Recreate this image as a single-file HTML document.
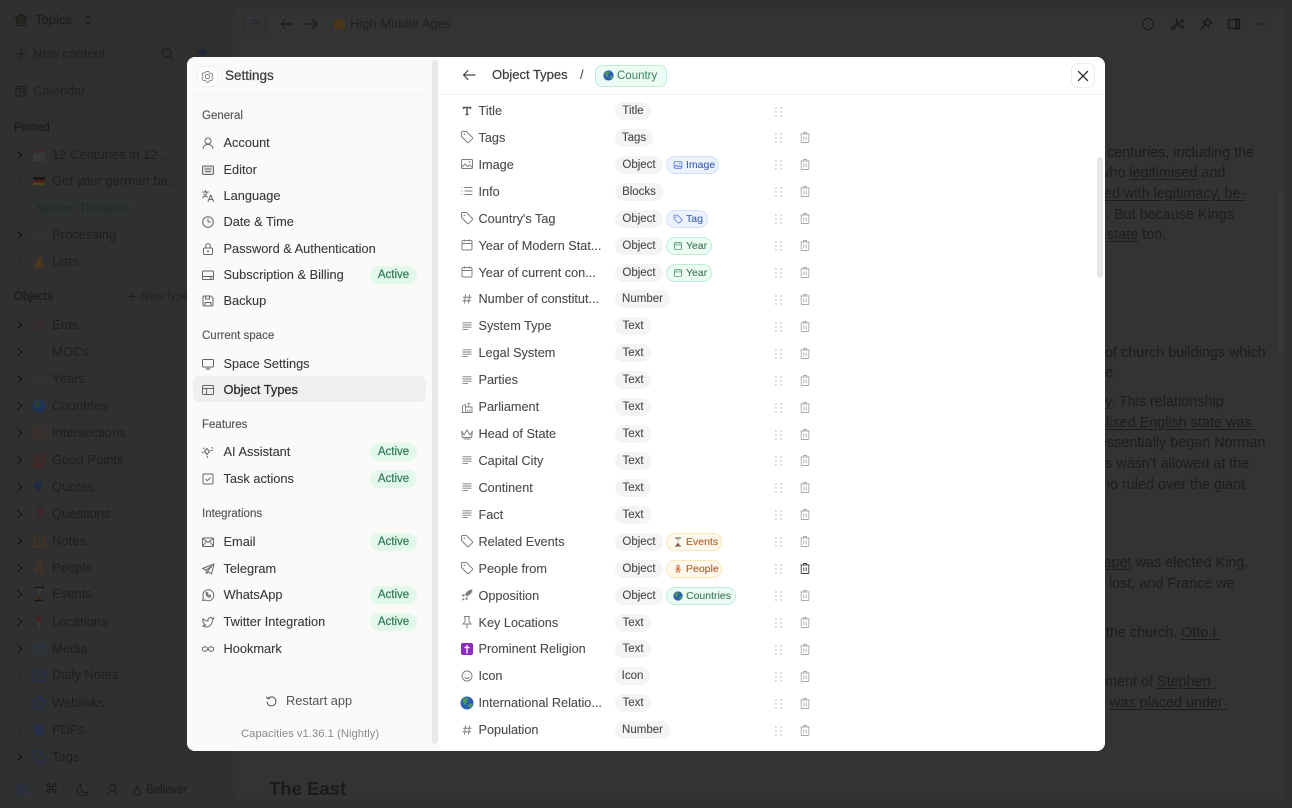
<!DOCTYPE html>
<html lang="en"><head><meta charset="utf-8"><title>Settings</title>
<style>
*{box-sizing:border-box}
html,body{margin:0;padding:0;width:1292px;height:808px;overflow:hidden;background:#303030;font-family:"Liberation Sans","Noto Sans CJK SC",sans-serif}
#w{position:absolute;left:0;top:0;width:1292px;height:808px;overflow:hidden;filter:blur(.3px)}
.a{position:absolute;white-space:nowrap}
svg{display:block;overflow:visible}
svg.s{fill:none;stroke:currentColor;stroke-width:1;stroke-linecap:round;stroke-linejoin:round}
.main{position:absolute;left:233px;top:8px;width:1052px;height:792px;background:#333;border:1px solid #323232;border-radius:8px}
.p{position:absolute;font-size:14.4px;line-height:20px;color:#1d1d1d;white-space:nowrap}
.p u{text-underline-offset:2px}
.st{position:absolute;left:0;width:190px;height:20px;font-size:13px;line-height:20px;color:#1e1e1e;white-space:nowrap}
.st .t{position:absolute;left:52px;top:0}
.st .ch{position:absolute;left:16px;top:6px;width:8px;height:8px;color:#141414}
.st .ch.d{color:#2a2a2a}
.st .ic{position:absolute;left:31px;top:2px;width:16px;height:16px}
.hd{position:absolute;font-size:11.5px;line-height:16px;color:#1b1b1b;-webkit-text-stroke:.2px #1b1b1b}
.box{position:absolute;border:1px solid #2e2e2e;background:#2f2f2f;border-radius:7px}
.modal{position:absolute;left:187px;top:57px;width:918px;height:694px;background:#fff;border-radius:8px;overflow:hidden}
.lp{position:absolute;left:187px;top:57px;width:252px;height:694px;background:#fafaf9;border-radius:8px 0 0 8px}
.li{position:absolute;left:0;width:252px;height:20px;margin-left:187px;font-size:12.8px;line-height:20px;color:#383838;white-space:nowrap;-webkit-text-stroke:.1px #383838}
.li svg{position:absolute;left:14px;top:3px;width:14px;height:14px;color:#666}
.li .t{position:absolute;left:36.5px;top:0}
.ac{position:absolute;left:183px;top:1px;width:47px;height:18px;border-radius:9px;background:#e3f8ec;color:#2f7a52;font-size:11.5px;line-height:18px;text-align:center;-webkit-text-stroke:.2px #2f7a52}
.sh{position:absolute;left:202px;font-size:11.5px;line-height:16px;color:#555;-webkit-text-stroke:.15px #555;white-space:nowrap}
.rows{position:absolute;left:0;top:97.5px;width:1292px}
.r{position:relative;height:26.93px;font-size:12.7px;color:#4a4a4a;-webkit-text-stroke:.1px #4a4a4a}
.r>svg.i{position:absolute;left:460px;top:6px;width:14px;height:14px;color:#808080}
.r>.n{position:absolute;left:478.5px;top:3.5px;line-height:20px;white-space:nowrap}
.r>.c{position:absolute;left:615px;top:4.5px;height:18px;border-radius:9px;background:#f4f4f3;font-size:11.5px;line-height:18px;text-align:center;color:#484848}
.r>.o{position:absolute;left:666px;top:4.5px;height:18px;border-radius:9px;font-size:10.5px;line-height:16px;border:1px solid;display:block;white-space:nowrap}
.o svg{position:absolute;left:6px;top:3px;width:10px;height:10px}
.o span{position:absolute;left:19px;top:0}
.bl{color:#3a67d0;background:#ecf3fe;border-color:#cfe0fb!important}
.gr{color:#3a8560;background:#ecfbf3;border-color:#bfeed5!important}
.or{color:#c4622a;background:#fef9ec;border-color:#f9e5b8!important}
.r>svg.dg{position:absolute;left:774.500px;top:9px;width:7px;height:10px;color:#d6d6d6}
.r>svg.tr{position:absolute;left:800px;top:8px;width:10px;height:11px;color:#aaa}
</style></head><body><div id="w">

<svg width="0" height="0" style="position:absolute">
<defs>
<symbol id="chev" viewBox="0 0 8 8"><path d="M2 .5 5.600 4 2 7.500" fill="none" stroke="currentColor" stroke-width="1.100" stroke-linecap="round" stroke-linejoin="round"/></symbol>
<symbol id="tag" viewBox="0 0 14 14"><path d="M1.500 2.400c0-.5.400-.9.900-.9h4l6 6c.4.400.4 1 0 1.300l-3.700 3.700c-.4.400-1 .4-1.300 0l-5.900-6z" fill="none" stroke="currentColor" stroke-width="1"/><circle cx="4.300" cy="4.300" r=".8" fill="currentColor"/></symbol>
<symbol id="img" viewBox="0 0 14 14"><rect x="1.500" y="2.500" width="11" height="9" rx="1" fill="none" stroke="currentColor"/><path d="m2 10 3-3 2.500 2.500L9.500 8l3 2.500" fill="none" stroke="currentColor"/><circle cx="9.500" cy="5.200" r=".8" fill="currentColor"/></symbol>
<symbol id="list" viewBox="0 0 14 14"><path d="M4.500 3.500h8M4.500 7h8M4.500 10.500h8M1.500 3.500h.8M1.500 7h.8M1.500 10.500h.8" fill="none" stroke="currentColor" stroke-width="1.100"/></symbol>
<symbol id="cal" viewBox="0 0 14 14"><rect x="2" y="2.500" width="10" height="9.500" rx="1.200" fill="none" stroke="currentColor"/><path d="M2 5.500h10M4.500 1.500v2M9.500 1.500v2" fill="none" stroke="currentColor"/></symbol>
<symbol id="hash" viewBox="0 0 14 14"><path d="M5.500 2.500 4.500 11.500M9.500 2.500 8.500 11.500M3 5.300h8.500M2.500 8.700H11" fill="none" stroke="currentColor" stroke-width="1"/></symbol>
<symbol id="txt" viewBox="0 0 14 14"><path d="M2.500 3.800h9M2.500 6h9M2.500 8.200h9M2.500 10.400h5.500" fill="none" stroke="currentColor" stroke-width=".9"/></symbol>
<symbol id="drag" viewBox="0 0 7 10"><g fill="currentColor"><rect x="0" y="0" width="1.800" height="1.800"/><rect x="5" y="0" width="1.800" height="1.800"/><rect x="0" y="4" width="1.800" height="1.800"/><rect x="5" y="4" width="1.800" height="1.800"/><rect x="0" y="8" width="1.800" height="1.800"/><rect x="5" y="8" width="1.800" height="1.800"/></g></symbol>
<symbol id="trash" viewBox="0 0 10 11"><path d="M.5 2h9M3.500 2V.5h3V2M1.200 2v8c0 .3.200.5.500.5h6.600c.3 0 .5-.2.500-.5V2M3.800 4.500v3.800M6.200 4.500v3.800" fill="none" stroke="currentColor" stroke-width=".9"/></symbol>
<symbol id="globe" viewBox="0 0 14 14"><circle cx="7" cy="7" r="6.500" fill="#2b5fb5"/><path d="M3 3c2-1 4-1.500 5.500-.5C8 4.500 6 4.500 6.500 6.500 7 8.500 5 9.500 4 8 3 7 2 5 3 3zM9 8c1.500-.5 3.500-.5 3.500.5-.3 2-1.500 3-3 3.500C8.500 11 8 9 9 8z" fill="#4d9b57"/></symbol>
<symbol id="hour" viewBox="0 0 14 14"><path d="M3 1.500h8M3 12.500h8" stroke="#555" stroke-width="1.500"/><path d="M4 2h6c0 3-2.500 3.800-2.500 5S10 9 10 12H4c0-3 2.500-3.800 2.500-5S4 5 4 2z" fill="#d9d9d9"/><path d="M4.800 12c0-1.500 1.200-3 2.200-3.500 1 .5 2.200 2 2.200 3.500z" fill="#8a4a2a"/></symbol>
<symbol id="people" viewBox="0 0 14 14"><g fill="none" stroke="#d2703a" stroke-width="1.200"><circle cx="7" cy="3.500" r="1.800"/><path d="M7 5.500 3 8.500M7 5.500l4 3M7 5.500l-2.500 7M7 5.500l2.500 7M4.800 10.500h4.400"/></g></symbol>
</defs>
</svg>

<!-- dimmed app: sidebar -->
<svg class="a" style="left:14px;top:13px;width:14px;height:14px;color:#1f1b14" viewBox="0 0 14 14"><path d="M1.500 5 7 1.500 12.500 5zM3 6v5M5.500 6v5M8.500 6v5M11 6v5M1.500 12.500h11" fill="none" stroke="currentColor" stroke-width="1.300"/></svg>
<div class="a" style="left:35px;top:10px;font-size:13px;line-height:20px;color:#1c1c1c;-webkit-text-stroke:.15px #1c1c1c">Topics</div>
<svg class="a s" style="left:82px;top:14px;width:12px;height:12px;color:#1c1c1c" viewBox="0 0 12 12"><path d="M3.500 4.500 6 1.500l2.500 3M3.500 7.500 6 10.500l2.500-3"/></svg>

<div class="box" style="left:8px;top:40px;width:139px;height:27px"></div>
<svg class="a s" style="left:15px;top:48px;width:12px;height:12px;color:#1c1c1c" viewBox="0 0 12 12"><path d="M6 1v10M1 6h10"/></svg>
<div class="a" style="left:33px;top:44px;font-size:13px;line-height:20px;color:#202020">New content</div>
<div class="box" style="left:154px;top:40px;width:27px;height:27px"></div>
<svg class="a s" style="left:161px;top:47px;width:13px;height:13px;color:#1c1c1c" viewBox="0 0 13 13"><circle cx="5.800" cy="5.800" r="4.300"/><path d="m9 9 3 3"/></svg>
<div class="box" style="left:188px;top:40px;width:27px;height:27px"></div>
<svg class="a" style="left:196px;top:47px;width:13px;height:10px" viewBox="0 0 13 10"><path d="M6.500 1 9 4l2-1-1 4H3L1 3l3 1z" fill="#22263c"/></svg>

<svg class="a s" style="left:15px;top:85px;width:12px;height:12px;color:#1c1c1c" viewBox="0 0 12 12"><rect x="1" y="1.500" width="10" height="9.500" rx="1"/><path d="M1 4h10M4 6.500h1.500v2.500M7.500 6.500H9v2.500"/></svg>
<div class="a" style="left:33px;top:81px;font-size:13px;line-height:20px;color:#202020">Calendar</div>

<div class="hd" style="left:14px;top:120px">Pinned</div>

<div class="st" style="top:145px"><svg class="ch"><use href="#chev"/></svg><svg class="ic" viewBox="0 0 14 14"><rect x="2" y="2" width="10" height="10.500" rx="1" fill="#3a3a3a"/><rect x="2" y="2" width="10" height="3" fill="#40282a"/></svg><span class="t">12 Centuries in 12 ...</span></div>
<div class="st" style="top:171px"><svg class="ch d"><use href="#chev"/></svg><svg class="ic" viewBox="0 0 14 14"><rect x="2" y="3.500" width="10" height="2.400" fill="#151515"/><rect x="2" y="5.900" width="10" height="2.400" fill="#4a1c1c"/><rect x="2" y="8.300" width="10" height="2.400" fill="#4e431c"/></svg><span class="t">Get your german ba...</span></div>
<div class="a" style="left:32px;top:200px;width:102px;height:18px;border-radius:4px;background:#2f3230"></div>
<div class="st" style="top:198px;font-size:12px;color:#1f2a24"><svg class="ch d"><use href="#chev"/></svg><span class="t" style="left:36px">System Thoughts</span></div>
<div class="st" style="top:225px"><svg class="ch"><use href="#chev"/></svg><svg class="ic" viewBox="0 0 14 14"><circle cx="7" cy="7" r="4" fill="none" stroke="#3c3c34" stroke-width="1.100" stroke-dasharray="1.300 1.700"/></svg><span class="t">Processing</span></div>
<div class="st" style="top:252px"><svg class="ch d"><use href="#chev"/></svg><svg class="ic" viewBox="0 0 14 14"><path d="M3 12c-.5-3 .5-5 3-7 .5-1.500 1-3 2.500-3l1 2-1.500 1c1 1 3 2 3 4.500 0 2-1.500 2.500-3 2.500z" fill="#4a371c"/></svg><span class="t">Lists</span></div>

<div class="hd" style="left:14px;top:289px">Objects</div>
<svg class="a s" style="left:126px;top:291px;width:11px;height:11px;color:#1c1c1c" viewBox="0 0 12 12"><path d="M6 1v10M1 6h10"/></svg>
<div class="a" style="left:141px;top:289px;width:46px;overflow:hidden;font-size:11.500px;line-height:16px;color:#202020">New type</div>

<div class="st" style="top:315px"><svg class="ch"><use href="#chev"/></svg><svg class="ic" viewBox="0 0 14 14"><path d="m2.500 9 6.500-6.500 2.500 2.500L5 11.500z" fill="none" stroke="#3c2830" stroke-width="1.200"/></svg><span class="t">Eras</span></div>
<div class="st" style="top:342px"><svg class="ch"><use href="#chev"/></svg><svg class="ic" viewBox="0 0 14 14"><path d="m3 3 4 4 4-3M7 7l-3 4M7 7l4 3" fill="none" stroke="#2e3531" stroke-width="1.300"/></svg><span class="t">MOCs</span></div>
<div class="st" style="top:369px"><svg class="ch"><use href="#chev"/></svg><svg class="ic" style="color:#2f3733"><use href="#cal"/></svg><span class="t">Years</span></div>
<div class="st" style="top:396px"><svg class="ch"><use href="#chev"/></svg><svg class="ic" viewBox="0 0 14 14"><circle cx="7" cy="7" r="5.800" fill="#1f3358"/><path d="M4 3c2-1 3.500-1 4.500 0C8 5 6 5 6.500 7 6.500 8.500 5 8.500 4 7.500 3.500 6.500 3 4.500 4 3z" fill="#2a3f30"/></svg><span class="t">Countries</span></div>
<div class="st" style="top:423px"><svg class="ch"><use href="#chev"/></svg><svg class="ic" viewBox="0 0 14 14"><path d="M11 7.500V12H2.500V3.500H7M6 8l5.500-5.500" fill="none" stroke="#483024" stroke-width="1.200"/></svg><span class="t">Intersections</span></div>
<div class="st" style="top:450px"><svg class="ch"><use href="#chev"/></svg><svg class="ic" viewBox="0 0 14 14"><path d="M3 3 2 9M6 3h2l-.5 6h-2zM10 3h2l-.5 6h-2zM2 11h10M3 13h7" fill="none" stroke="#452422" stroke-width="1.200"/></svg><span class="t">Good Points</span></div>
<div class="st" style="top:477px"><svg class="ch"><use href="#chev"/></svg><svg class="ic" viewBox="0 0 14 14"><path d="M2.500 6c0-3 2-4 4.500-4 2.500 0 3.500 2 3 4.500-.5 2-2 3-3 3l-1 2.500-1-3C3.500 8.500 2.500 7.500 2.500 6z" fill="#202a40"/></svg><span class="t">Quotes</span></div>
<div class="st" style="top:504px"><svg class="ch"><use href="#chev"/></svg><svg class="ic" viewBox="0 0 14 14"><path d="M5 4.500C5 2 9.500 2 9.500 4.500c0 2-2.300 2-2.300 4M7.200 10.500v1.500" fill="none" stroke="#4a1c1a" stroke-width="1.700"/></svg><span class="t">Questions</span></div>
<div class="st" style="top:531px"><svg class="ch"><use href="#chev"/></svg><svg class="ic" viewBox="0 0 14 14"><rect x="3" y="2.500" width="8" height="9.500" rx="1" fill="none" stroke="#473520" stroke-width="1.300"/><path d="M5 7h4" stroke="#473520" stroke-width="1.200"/></svg><span class="t">Notes</span></div>
<div class="st" style="top:558px"><svg class="ch"><use href="#chev"/></svg><svg class="ic" viewBox="0 0 14 14"><g fill="none" stroke="#483222" stroke-width="1.300"><circle cx="7" cy="3.500" r="1.800"/><path d="M7 5.500 3 8.500M7 5.500l4 3M7 5.500l-2.500 7M7 5.500l2.500 7"/></g></svg><span class="t">People</span></div>
<div class="st" style="top:584px"><svg class="ch"><use href="#chev"/></svg><svg class="ic" viewBox="0 0 14 14"><path d="M3 1.500h8M3 12.500h8" stroke="#151515" stroke-width="1.500"/><path d="M4 2h6c0 3-2.500 3.800-2.500 5S10 9 10 12H4c0-3 2.500-3.800 2.500-5S4 5 4 2z" fill="#3a3a3a"/><path d="M4.800 12c0-1.500 1.200-3 2.200-3.500 1 .5 2.200 2 2.200 3.500z" fill="#3a2218"/></svg><span class="t">Events</span></div>
<div class="st" style="top:612px"><svg class="ch"><use href="#chev"/></svg><svg class="ic" viewBox="0 0 14 14"><circle cx="7" cy="4.500" r="2.500" fill="#4a1f1f"/><path d="M7 7v5.500" stroke="#3c3c3c" stroke-width="1.200"/></svg><span class="t">Locations</span></div>
<div class="st" style="top:639px"><svg class="ch"><use href="#chev"/></svg><svg class="ic" viewBox="0 0 14 14"><path d="M2.500 6h9v6h-9zM2.500 4.500l8.500-2 .4 1.500-8.500 2z" fill="none" stroke="#2b3442" stroke-width="1.200"/></svg><span class="t">Media</span></div>
<div class="st" style="top:665px"><svg class="ch d"><use href="#chev"/></svg><svg class="ic" viewBox="0 0 14 14"><rect x="2" y="2.500" width="10" height="9.500" rx="1.200" fill="none" stroke="#232f4c" stroke-width="1.300"/><path d="M2 5.500h10M5 8.500l1.500 1.500L9 7.500" fill="none" stroke="#232f4c" stroke-width="1.100"/></svg><span class="t">Daily Notes</span></div>
<div class="st" style="top:693px"><svg class="ch d"><use href="#chev"/></svg><svg class="ic" viewBox="0 0 14 14"><circle cx="7" cy="7" r="5.300" fill="none" stroke="#232f4c" stroke-width="1.300"/><path d="M2.500 5c2 0 3 1 3.500 2s2 2 1.500 4.500M8 2c0 2 2 2 4 3" fill="none" stroke="#232f4c" stroke-width="1.200"/></svg><span class="t">Weblinks</span></div>
<div class="st" style="top:720px"><svg class="ch d"><use href="#chev"/></svg><svg class="ic" viewBox="0 0 14 14"><path d="M3 2h5l3 3v7H3z" fill="#232f4c"/><path d="M4 8.500h6M4 10.500h6" stroke="#3a3a3a" stroke-width=".8"/></svg><span class="t">PDFs</span></div>
<div class="st" style="top:747px"><svg class="ch"><use href="#chev"/></svg><svg class="ic" style="color:#232f4c"><use href="#tag"/></svg><span class="t">Tags</span></div>

<div class="box" style="left:9px;top:778px;width:25px;height:24px;background:#313131"></div>
<svg class="a s" style="left:15px;top:783px;width:14px;height:14px;color:#232f4c;stroke-width:1.300" viewBox="0 0 14 14"><path d="M7 1 12 4v6l-5 3-5-3V4z"/><circle cx="7" cy="7" r="2"/></svg>
<div class="a" style="left:45px;top:780px;font-size:13px;line-height:20px;color:#1c1c1c;-webkit-text-stroke:.2px #1c1c1c;font-family:'DejaVu Sans',sans-serif">⌘</div>
<svg class="a s" style="left:76px;top:783px;width:14px;height:14px;color:#1c1c1c" viewBox="0 0 14 14"><path d="M5.500 1.500A5.800 5.800 0 1 0 12.500 8.500 5 5 0 0 1 5.500 1.500z"/></svg>
<svg class="a s" style="left:106px;top:783px;width:13px;height:13px;color:#1c1c1c" viewBox="0 0 13 13"><circle cx="6.500" cy="4.500" r="3"/><path d="M1.500 12c.5-2.500 2.500-4 5-4s4.500 1.500 5 4"/></svg>
<div class="a" style="left:125px;top:780px;width:68px;height:20px;border-radius:10px;background:#313131"></div>
<svg class="a s" style="left:132px;top:785px;width:10px;height:11px;color:#1c1c1c" viewBox="0 0 10 11"><path d="M5 1c.5 2 3.500 3 3.500 6A3.500 3.500 0 0 1 1.500 7C1.500 5.500 2.500 5 3 4c.5.500 1 .8 1 .8C4 3 4.500 2 5 1z"/></svg>
<div class="a" style="left:146px;top:780px;font-size:11.500px;line-height:20px;color:#1f1f1f;-webkit-text-stroke:.2px #1f1f1f">Believer</div>

<!-- dimmed app: main -->
<div class="main"></div>
<div class="a" style="left:1277px;top:193px;width:6px;height:160px;background:#383838;border-radius:3px"></div>
<div class="box" style="left:243px;top:12px;width:23px;height:23px;border-radius:6px;background:#333"></div>
<svg class="a" style="left:248px;top:17px;width:13px;height:13px;color:#222838" viewBox="0 0 14 14"><use href="#list"/></svg>
<svg class="a s" style="left:280px;top:18px;width:13px;height:12px;color:#1c1c1c;stroke-width:1.200" viewBox="0 0 13 12"><path d="M12 6H1M5.500 1.500 1 6l4.500 4.500"/></svg>
<svg class="a s" style="left:305px;top:18px;width:13px;height:12px;color:#1c1c1c;stroke-width:1.200" viewBox="0 0 13 12"><path d="M1 6h11M7.500 1.500 12 6l-4.500 4.500"/></svg>
<svg class="a" style="left:333px;top:18px;width:13px;height:12px" viewBox="0 0 13 12"><path d="M1 11V5c0-2.500 2.500-4 5.500-4S12 2.500 12 5v6z" fill="#4a3618"/><path d="M3 8h7" stroke="#55281c" stroke-dasharray="1 1"/></svg>
<div class="a" style="left:350px;top:14px;font-size:13px;line-height:20px;color:#202020">High Middle Ages</div>

<svg class="a s" style="left:1141px;top:17px;width:14px;height:14px;color:#161616;stroke-width:1.200" viewBox="0 0 14 14"><circle cx="7" cy="7" r="5.500" stroke-dasharray="2.200 1.800"/></svg>
<svg class="a s" style="left:1170px;top:17px;width:14px;height:14px;color:#161616" viewBox="0 0 14 14"><circle cx="3" cy="11" r="1.500"/><circle cx="12" cy="10" r="1.300"/><circle cx="12" cy="4" r="1.300"/><path d="M6.500 1.500 7 7 4 10M7 7l4-2.500M7 7l4 2.500" stroke-width="1.300"/></svg>
<svg class="a s" style="left:1199px;top:17px;width:14px;height:14px;color:#161616;stroke-width:1.200" viewBox="0 0 14 14"><path d="M8.500 1.500 12.500 5.500 10 7l-.5 3L4 4.500 7 4zM6 8l-4 4.500"/></svg>
<svg class="a s" style="left:1227px;top:17px;width:14px;height:14px;color:#161616;stroke-width:1.200" viewBox="0 0 14 14"><rect x="1.500" y="2.500" width="11" height="9" rx="1"/><rect x="9" y="2.500" width="3.500" height="9" fill="#262626"/></svg>
<svg class="a" style="left:1257px;top:23px;width:12px;height:2px;color:#161616" viewBox="0 0 12 2"><g fill="currentColor"><circle cx="1.500" cy="1" r=".9"/><circle cx="6" cy="1" r=".9"/><circle cx="10.500" cy="1" r=".9"/></g></svg>

<div class="p" style="left:1107px;top:142.500px">centuries, including the</div>
<div class="p" style="left:1099px;top:162.500px">who <u>legitimised</u> and</div>
<div class="p" style="left:1096px;top:183.500px"><u>ned with legitimacy, be-</u></div>
<div class="p" style="left:1098px;top:204.500px"><u>e</u>. But because Kings</div>
<div class="p" style="left:1107px;top:224.500px"><u>state</u> too.</div>
<div class="p" style="left:1105px;top:342.500px">of church buildings which</div>
<div class="p" style="left:1105px;top:363px">e.</div>
<div class="p" style="left:1105px;top:392px"><u>y</u>. This relationship</div>
<div class="p" style="left:1098px;top:412.500px"><u>alised English state was&nbsp;</u></div>
<div class="p" style="left:1099px;top:433px">essentially began Norman</div>
<div class="p" style="left:1105px;top:454px">s wasn't allowed at the</div>
<div class="p" style="left:1102px;top:474.500px">ho ruled over the giant</div>
<div class="p" style="left:1103.500px;top:553px"><u>apet</u> was elected King,</div>
<div class="p" style="left:1109px;top:573.500px">lost, and France we</div>
<div class="p" style="left:1106px;top:623px">the church. <u>Otto I&nbsp;</u></div>
<div class="p" style="left:1105px;top:672px">ment of <u>Stephen&nbsp;</u></div>
<div class="p" style="left:1110px;top:692.500px"><u>was placed under&nbsp;</u></div>
<div class="a" style="left:269px;top:776.500px;font-size:18.500px;line-height:24px;font-weight:700;color:#1b1b1b">The East</div>

<!-- modal -->
<div class="modal"></div>
<div class="lp"></div>
<div class="a" style="left:432px;top:60px;width:6px;height:684px;background:#e8e8e6;border-radius:3px"></div>
<div class="a" style="left:193px;top:94px;width:233px;height:1px;background:#f2f2f0"></div>
<div class="a" style="left:440px;top:94px;width:665px;height:1px;background:#f3f3f2"></div>
<div class="a" style="left:1097px;top:157px;width:6px;height:121px;background:#e6e6e6;border-radius:3px"></div>

<div class="a" style="left:197px;top:66px;width:21px;height:21px;background:#fff;border:1px solid #efefed;border-radius:6px"></div>
<svg class="a s" style="left:201px;top:70px;width:13px;height:13px;color:#777" viewBox="0 0 14 14"><path d="M5.500 1.200h3l.6 1.700 1.700.9 1.700-.4 1.300 2.500-1.200 1.300v1.600l1.200 1.300-1.300 2.500-1.700-.4-1.700.9-.6 1.700h-3l-.6-1.700-1.700-.9-1.700.4L-.1 9.600l1.200-1.300V6.700L-.1 5.400l1.300-2.500 1.700.4 1.700-.9z" transform="translate(1 .5) scale(.86)"/><circle cx="7" cy="7" r="2.300"/></svg>
<div class="a" style="left:225px;top:66px;font-size:13.500px;line-height:20px;color:#383838;-webkit-text-stroke:.2px #383838">Settings</div>

<div class="sh" style="top:107.500px">General</div>
<div class="li" style="top:133px"><svg class="s" viewBox="0 0 14 14"><circle cx="7" cy="5" r="3"/><path d="M2 12.500c.5-2.500 2.500-4 5-4s4.500 1.500 5 4"/></svg><span class="t">Account</span></div>
<div class="li" style="top:159.500px"><svg class="s" viewBox="0 0 14 14"><rect x="1.500" y="3" width="11" height="8.500" rx="1" fill="#ddd"/><path d="M4 6h6M4.500 8.500h5"/></svg><span class="t">Editor</span></div>
<div class="li" style="top:186px"><svg class="s" viewBox="0 0 14 14"><path d="M1.500 3h6M4.500 1.500V3M6 3C5.500 5.500 4 7.500 1.500 8.500M3 5c.5 1.500 2 2.500 3.500 3M7 12.500 9.700 6l2.800 6.500M8 10.500h3.500"/></svg><span class="t">Language</span></div>
<div class="li" style="top:212px"><svg class="s" viewBox="0 0 14 14"><circle cx="7" cy="7" r="5.300"/><path d="M7 3.800V7h2.800"/></svg><span class="t">Date &amp; Time</span></div>
<div class="li" style="top:239px"><svg class="s" viewBox="0 0 14 14"><rect x="2.500" y="6" width="9" height="6.500" rx="1"/><path d="M4.800 6V3.800a2.200 2.200 0 0 1 4.400 0V6"/><circle cx="7" cy="9.300" r=".5" fill="currentColor"/></svg><span class="t">Password &amp; Authentication</span></div>
<div class="li" style="top:265px"><svg class="s" viewBox="0 0 14 14"><rect x="1.500" y="3" width="11" height="8.500" rx="1"/><path d="M1.500 8.500h11M9 10h1.500"/></svg><span class="t">Subscription &amp; Billing</span><span class="ac">Active</span></div>
<div class="li" style="top:290.500px"><svg class="s" viewBox="0 0 14 14"><path d="M2 3c0-.5.500-1 1-1h7l2 2v7c0 .6-.4 1-1 1H3c-.5 0-1-.4-1-1z"/><path d="M4.500 2v3h4V2M4 12V8.500h6V12"/></svg><span class="t">Backup</span></div>

<div class="sh" style="top:328px">Current space</div>
<div class="li" style="top:354px"><svg class="s" viewBox="0 0 14 14"><rect x="1.500" y="2.500" width="11" height="7.500" rx="1"/><path d="M5 12h4M7 10v2"/></svg><span class="t">Space Settings</span></div>
<div class="a" style="left:193px;top:376px;width:233px;height:26px;background:#efefed;border-radius:7px"></div>
<div class="li" style="top:380px;color:#2a2a2a;-webkit-text-stroke:.25px #2a2a2a"><svg class="s" viewBox="0 0 14 14"><rect x="1.500" y="2.500" width="11" height="9" rx="1"/><path d="M1.500 5.500h11M5.500 5.500v6"/></svg><span class="t">Object Types</span></div>

<div class="sh" style="top:417px">Features</div>
<div class="li" style="top:441.500px"><svg class="s" viewBox="0 0 14 14"><path d="M6 3.500 8.500 6.500 6 9.500 3.500 6.500zM1.200 7l1 .8M6 11l.5 1.500M11 2.500l.8.8M10 5.500h1.500M2.500 3l.8.8"/></svg><span class="t">AI Assistant</span><span class="ac">Active</span></div>
<div class="li" style="top:468.500px"><svg class="s" viewBox="0 0 14 14"><rect x="2" y="2" width="10" height="10" rx="1"/><path d="m4.800 7.200 1.500 1.500 3-3"/></svg><span class="t">Task actions</span><span class="ac">Active</span></div>

<div class="sh" style="top:506px">Integrations</div>
<div class="li" style="top:532px"><svg class="s" viewBox="0 0 14 14"><rect x="1.500" y="3" width="11" height="8.500" rx="1"/><path d="m1.800 3.500 5.200 4 5.200-4M1.800 11l3.500-4.500M12.200 11 8.700 6.500"/></svg><span class="t">Email</span><span class="ac">Active</span></div>
<div class="li" style="top:559px"><svg class="s" viewBox="0 0 14 14"><path d="M13 2 1.500 6.500 5 8l6-4-4.500 5 4 3zM5 8l.5 3.500 2-1.800"/></svg><span class="t">Telegram</span></div>
<div class="li" style="top:584.500px"><svg class="s" viewBox="0 0 14 14"><path d="M1.500 12.500l.9-2.800A5.500 5.500 0 1 1 4.500 12z"/><path d="M5 4.800c-.5 2 2 4.800 4.200 4.400l.6-1.200L8.500 7.200l-.6.6c-.7-.3-1.200-.9-1.400-1.500l.6-.6L6 4.400z"/></svg><span class="t">WhatsApp</span><span class="ac">Active</span></div>
<div class="li" style="top:611.500px"><svg class="s" viewBox="0 0 14 14"><path d="M13 3c-.5.800-1 1.100-1.500 1.500C11.500 9 8.500 12 5 12c-1.500 0-2.500-.4-3.500-1 1.300 0 2.400-.4 3-1C2.500 9 1.500 6.500 2 3.500 3 5 5 6 7 6c-.5-2 1-3.500 2.500-3.500.8 0 1.400.3 1.800.8z"/></svg><span class="t">Twitter Integration</span><span class="ac">Active</span></div>
<div class="li" style="top:639px"><svg class="s" viewBox="0 0 14 14"><path d="M7 7C6 5.500 5 4.700 3.600 4.700a2.300 2.300 0 0 0 0 4.600C5 9.300 6 8.500 7 7s2-2.300 3.400-2.300a2.300 2.300 0 0 1 0 4.600C9 9.300 8 8.500 7 7z"/></svg><span class="t">Hookmark</span></div>

<svg class="a s" style="left:265px;top:695px;width:13px;height:13px;color:#555" viewBox="0 0 13 13"><path d="M3 3.500A4.500 4.500 0 1 1 2 7M1.500 2l1.300 1.800L4.800 3"/></svg>
<div class="a" style="left:286px;top:691px;font-size:12.800px;line-height:20px;color:#555">Restart app</div>
<div class="a" style="left:241px;top:723.500px;font-size:11.300px;line-height:20px;color:#8a8a8a">Capacities v1.36.1 (Nightly)</div>

<svg class="a s" style="left:462px;top:69px;width:14px;height:12px;color:#444;stroke-width:1.200" viewBox="0 0 14 12"><path d="M13 6H1.500M6 1.500 1.500 6 6 10.500"/></svg>
<div class="a" style="left:492px;top:65px;font-size:13px;line-height:20px;color:#3c3c3c;-webkit-text-stroke:.2px #3c3c3c">Object Types</div>
<div class="a" style="left:580px;top:65px;font-size:13px;line-height:20px;color:#3c3c3c">/</div>
<div class="a gr" style="left:595px;top:65px;width:72px;height:22px;border:1px solid;border-radius:7px"></div>
<svg class="a" style="left:603px;top:70px;width:11px;height:11px"><use href="#globe"/></svg>
<div class="a" style="left:617px;top:66px;font-size:11.500px;line-height:20px;color:#3a8560">Country</div>
<div class="a" style="left:1071px;top:63px;width:24px;height:25px;background:#fff;border:1px solid #ededeb;border-radius:7px"></div>
<svg class="a s" style="left:1078px;top:70.500px;width:10px;height:10px;color:#333;stroke-width:1.300" viewBox="0 0 10 10"><path d="m.5.500 9 9M9.500.500l-9 9"/></svg>

<div class="rows">
<div class="r"><svg class="i" viewBox="0 0 14 14" style="color:#555"><path d="M3.500 5V3.500h7V5M7 3.500v7M5.500 10.500h3" fill="none" stroke="currentColor" stroke-width="1.500"/></svg><span class="n">Title</span><span class="c" style="width:36px">Title</span><svg class="dg"><use href="#drag"/></svg></div>
<div class="r"><svg class="i"><use href="#tag"/></svg><span class="n">Tags</span><span class="c" style="width:38px">Tags</span><svg class="dg"><use href="#drag"/></svg><svg class="tr"><use href="#trash"/></svg></div>
<div class="r"><svg class="i"><use href="#img"/></svg><span class="n">Image</span><span class="c" style="width:48px">Object</span><span class="o bl" style="width:53px"><svg><use href="#img"/></svg><span>Image</span></span><svg class="dg"><use href="#drag"/></svg><svg class="tr"><use href="#trash"/></svg></div>
<div class="r"><svg class="i"><use href="#list"/></svg><span class="n">Info</span><span class="c" style="width:48px">Blocks</span><svg class="dg"><use href="#drag"/></svg><svg class="tr"><use href="#trash"/></svg></div>
<div class="r"><svg class="i"><use href="#tag"/></svg><span class="n">Country's Tag</span><span class="c" style="width:48px">Object</span><span class="o bl" style="width:42px"><svg><use href="#tag"/></svg><span>Tag</span></span><svg class="dg"><use href="#drag"/></svg><svg class="tr"><use href="#trash"/></svg></div>
<div class="r"><svg class="i"><use href="#cal"/></svg><span class="n">Year of Modern Stat...</span><span class="c" style="width:48px">Object</span><span class="o gr" style="width:46px"><svg><use href="#cal"/></svg><span>Year</span></span><svg class="dg"><use href="#drag"/></svg><svg class="tr"><use href="#trash"/></svg></div>
<div class="r"><svg class="i"><use href="#cal"/></svg><span class="n">Year of current con...</span><span class="c" style="width:48px">Object</span><span class="o gr" style="width:46px"><svg><use href="#cal"/></svg><span>Year</span></span><svg class="dg"><use href="#drag"/></svg><svg class="tr"><use href="#trash"/></svg></div>
<div class="r"><svg class="i"><use href="#hash"/></svg><span class="n">Number of constitut...</span><span class="c" style="width:55px">Number</span><svg class="dg"><use href="#drag"/></svg><svg class="tr"><use href="#trash"/></svg></div>
<div class="r"><svg class="i"><use href="#txt"/></svg><span class="n">System Type</span><span class="c" style="width:36px">Text</span><svg class="dg"><use href="#drag"/></svg><svg class="tr"><use href="#trash"/></svg></div>
<div class="r"><svg class="i"><use href="#txt"/></svg><span class="n">Legal System</span><span class="c" style="width:36px">Text</span><svg class="dg"><use href="#drag"/></svg><svg class="tr"><use href="#trash"/></svg></div>
<div class="r"><svg class="i"><use href="#txt"/></svg><span class="n">Parties</span><span class="c" style="width:36px">Text</span><svg class="dg"><use href="#drag"/></svg><svg class="tr"><use href="#trash"/></svg></div>
<div class="r"><svg class="i" viewBox="0 0 14 14"><path d="M1.500 12.500h11M2.500 12.500V6l3-1.500v8M5.500 7h6.500v5.500M8.700 7V3M7.500 3.500h3M7.800 9.500v3M10 9.500v3" fill="none" stroke="currentColor" stroke-width=".9"/></svg><span class="n">Parliament</span><span class="c" style="width:36px">Text</span><svg class="dg"><use href="#drag"/></svg><svg class="tr"><use href="#trash"/></svg></div>
<div class="r"><svg class="i" viewBox="0 0 14 14"><path d="M1.500 4 4 8l3-5 3 5 2.500-4-1 6.500h-9zM3.500 12h7" fill="none" stroke="currentColor" stroke-width="1"/></svg><span class="n">Head of State</span><span class="c" style="width:36px">Text</span><svg class="dg"><use href="#drag"/></svg><svg class="tr"><use href="#trash"/></svg></div>
<div class="r"><svg class="i"><use href="#txt"/></svg><span class="n">Capital City</span><span class="c" style="width:36px">Text</span><svg class="dg"><use href="#drag"/></svg><svg class="tr"><use href="#trash"/></svg></div>
<div class="r"><svg class="i"><use href="#txt"/></svg><span class="n">Continent</span><span class="c" style="width:36px">Text</span><svg class="dg"><use href="#drag"/></svg><svg class="tr"><use href="#trash"/></svg></div>
<div class="r"><svg class="i"><use href="#txt"/></svg><span class="n">Fact</span><span class="c" style="width:36px">Text</span><svg class="dg"><use href="#drag"/></svg><svg class="tr"><use href="#trash"/></svg></div>
<div class="r"><svg class="i"><use href="#tag"/></svg><span class="n">Related Events</span><span class="c" style="width:48px">Object</span><span class="o or" style="width:56px"><svg><use href="#hour"/></svg><span>Events</span></span><svg class="dg"><use href="#drag"/></svg><svg class="tr"><use href="#trash"/></svg></div>
<div class="r"><svg class="i"><use href="#tag"/></svg><span class="n">People from</span><span class="c" style="width:48px">Object</span><span class="o or" style="width:56px"><svg><use href="#people"/></svg><span>People</span></span><svg class="dg"><use href="#drag"/></svg><svg class="tr" style="color:#3c3c3c"><use href="#trash"/></svg></div>
<div class="r"><svg class="i" viewBox="0 0 14 14"><path d="M12.500 1.500c-3.500 0-6 2-7.500 5l2 2c3-1.500 5.500-4 5.500-7zM5 6.500H2.500L1.500 8l2.500.5zM7.500 9v2.500L6 12.500 5.500 10zM3.500 10c-1 .5-1.500 2-1.500 2.500.5 0 2-.5 2.500-1.500z" fill="currentColor"/></svg><span class="n">Opposition</span><span class="c" style="width:48px">Object</span><span class="o gr" style="width:70px"><svg><use href="#globe"/></svg><span>Countries</span></span><svg class="dg"><use href="#drag"/></svg><svg class="tr"><use href="#trash"/></svg></div>
<div class="r"><svg class="i" viewBox="0 0 14 14"><path d="M4 1.500h6M5 1.500v5L3 9h8L9 6.500v-5M7 9v4.500" fill="none" stroke="currentColor"/></svg><span class="n">Key Locations</span><span class="c" style="width:36px">Text</span><svg class="dg"><use href="#drag"/></svg><svg class="tr"><use href="#trash"/></svg></div>
<div class="r"><svg class="i" viewBox="0 0 14 14"><rect x="1" y="1" width="12" height="12" rx="2" fill="#8a2cc4"/><path d="M7 3v8.500M4.500 5.500h5" stroke="#fff" stroke-width="1.300"/></svg><span class="n">Prominent Religion</span><span class="c" style="width:36px">Text</span><svg class="dg"><use href="#drag"/></svg><svg class="tr"><use href="#trash"/></svg></div>
<div class="r"><svg class="i" viewBox="0 0 14 14"><circle cx="7" cy="7" r="5" fill="none" stroke="currentColor"/><path d="M4.700 8c.5 1 1.300 1.500 2.300 1.500S8.800 9 9.300 8M5 5.500v.5M9 5.500v.5" fill="none" stroke="currentColor"/></svg><span class="n">Icon</span><span class="c" style="width:35px">Icon</span><svg class="dg"><use href="#drag"/></svg><svg class="tr"><use href="#trash"/></svg></div>
<div class="r"><svg class="i" viewBox="0 0 14 14"><use href="#globe"/></svg><span class="n">International Relatio...</span><span class="c" style="width:36px">Text</span><svg class="dg"><use href="#drag"/></svg><svg class="tr"><use href="#trash"/></svg></div>
<div class="r"><svg class="i"><use href="#hash"/></svg><span class="n">Population</span><span class="c" style="width:55px">Number</span><svg class="dg"><use href="#drag"/></svg><svg class="tr"><use href="#trash"/></svg></div>
</div>

</div></body></html>
